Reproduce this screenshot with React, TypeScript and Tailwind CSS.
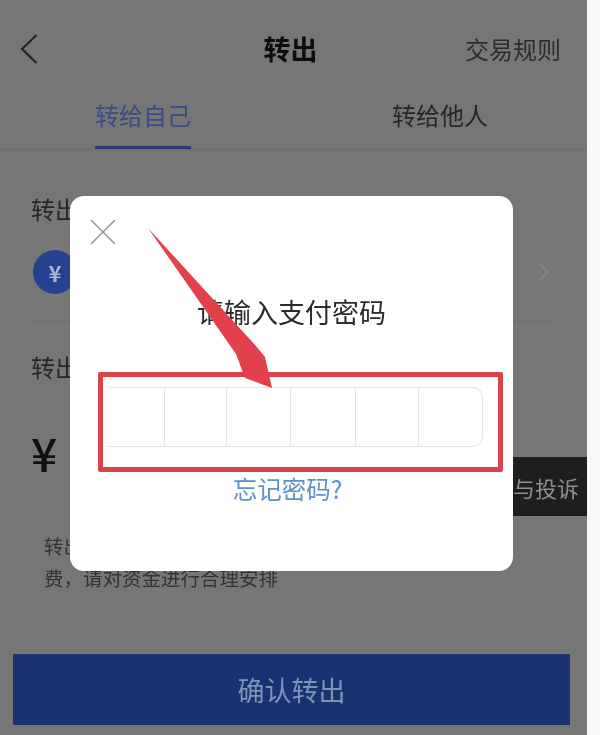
import { ChevronRight, X } from 'lucide-react'

export default function App() {
  return (
    <div className="relative flex h-[735px] w-[600px] overflow-hidden bg-[#f8f8f8] font-['Noto_Sans_CJK_SC',sans-serif] blur-[0.6px]">
      <div className="relative flex h-full w-[587px] flex-col bg-[#767676] text-[#1c1c1c]">
        <header className="grid h-[100px] grid-cols-[1fr_auto_1fr] items-center pb-[3px] pl-[20px] pr-[26px]">
          <svg width="18" height="30" viewBox="0 0 18 30" fill="none" stroke="#222" strokeWidth="2">
            <polyline points="16.5,1 2,15 16.5,29" />
          </svg>
          <h1 className="text-[27px] font-bold leading-none text-[#0c0c0c]">转出</h1>
          <span className="justify-self-end text-[24px] leading-none text-[#2d2d2d]">交易规则</span>
        </header>

        <nav className="flex h-[50px] gap-[201px] border-b border-[#6c6c6c] pl-[95px] text-[24px] leading-none">
          <div className="flex h-[49px] w-[96px] items-start border-b-[3px] border-[#2d3a78] pt-[3px] text-[#3b4a86]">转给自己</div>
          <div className="w-[96px] pt-[3px] text-[#262626]">转给他人</div>
        </nav>

        <main className="flex flex-1 flex-col px-[31px]">
          <div className="mt-[47px] text-[24px] leading-none text-[#262626]">转出到</div>
          <div className="mt-[29px] flex items-center justify-between pl-[2px]">
            <div className="flex h-[44px] w-[44px] items-center justify-center rounded-full bg-[#25418f] text-[22px] font-bold leading-none text-[#a9b3cf]">¥</div>
            <ChevronRight size={30} strokeWidth={1.4} className="-mr-[3px] text-[#858585]" />
          </div>
          <div className="mt-[27px] h-px bg-[#6c6c6c]" />
          <div className="mt-[33px] text-[24px] leading-none text-[#262626]">转出金额</div>
          <div className="mt-[50px] text-[46px] font-medium leading-none text-[#111]">¥</div>
          <div className="mt-[55px] pl-[13px] text-[19.5px] leading-[32px] text-[#333]">
            <p>转出金额</p>
            <p>费{'\uFF0C'}请对资金进行合理安排</p>
          </div>
        </main>

        <div className="px-[13px] pb-[10px] pr-[17px]">
          <button className="flex h-[71px] w-full items-center justify-center bg-[#1a3271] text-[27px] leading-none text-[#7d94b4]">
            确认转出
          </button>
        </div>

        <div className="absolute left-[513px] top-[457px] flex h-[59px] w-[74px] items-center bg-[#1e1e1e] text-[22px] leading-none text-[#8e8e8e]">
          与投诉
        </div>

        <div className="absolute left-[70px] top-[196px] flex h-[375px] w-[443px] flex-col rounded-[14px] bg-white pl-[28px] pr-[10px]">
          <X size={46} strokeWidth={0.7} className="-ml-[18px] mt-[13px] text-[#8f8f8f]" />
          <h2 className="mt-[41px] pr-[18px] text-center text-[27px] leading-[32px] text-[#2b2b2b]">请输入支付密码</h2>
          <div className="mt-[44px] h-[100px] rounded-[2px] border-[5px] border-[#d9434c] pl-[5px] pr-[15px] pt-[10px]">
            <div className="grid h-[60px] grid-cols-[57px_62px_64px_65px_63px_1fr] rounded-r-[10px] border border-l-0 border-[#e4e4e4]">
              <div className="border-r border-[#e4e4e4]" />
              <div className="border-r border-[#e4e4e4]" />
              <div className="border-r border-[#e4e4e4]" />
              <div className="border-r border-[#e4e4e4]" />
              <div className="border-r border-[#e4e4e4]" />
              <div />
            </div>
          </div>
          <a className="mt-[3px] pr-[26px] text-center text-[24.5px] leading-[28px] text-[#5f90c6]">忘记密码?</a>
        </div>

        <svg className="absolute left-0 top-0 h-[735px] w-[587px]" viewBox="0 0 587 735">
          <polygon points="148,228 256,346 265,357 272,388 245,378 236,354" fill="#e2414b" />
        </svg>
      </div>
    </div>
  )
}
